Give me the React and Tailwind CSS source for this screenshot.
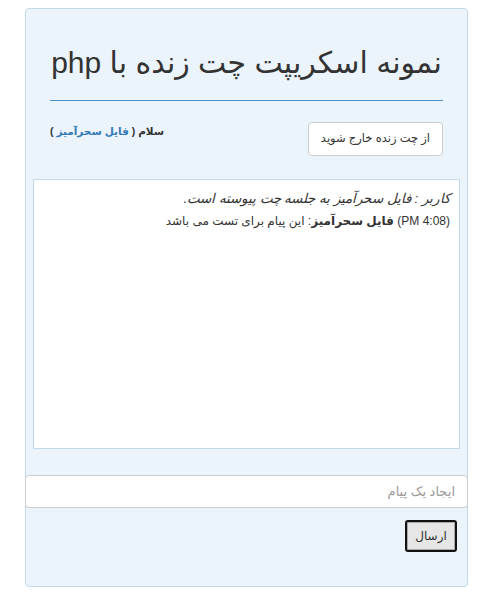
export default function App() {
  return (
    <div className="min-h-screen bg-white pt-[8px] font-['Liberation_Sans','DejaVu_Sans',sans-serif] text-[#333]">
      <div
        dir="rtl"
        className="ml-[25px] w-[443px] h-[579px] bg-[#ebf3fb] border border-[#c2d9ec] rounded-[4px]"
      >
        {/* Title */}
        <h1 className="pt-[34px] text-center whitespace-nowrap text-[30px] leading-[40px] text-[#333]">
          نمونه اسکریپت چت زنده با php
        </h1>
        <div className="mx-[24px] mt-[17px] h-px bg-[#4a94c9]" />

        {/* User row */}
        <div className="mx-[24px] mt-[21px] flex items-start justify-between">
          <button className="h-[34px] px-[12px] bg-white border border-[#ccc] rounded-[4px] text-[11.5px] text-[#333]">
            از چت زنده خارج شوید
          </button>
          <div className="pt-[2px] text-[10.5px] font-bold text-[#333]">
            سلام ( <span className="text-[#337ab7]">فایل سحرآمیز</span> )
          </div>
        </div>

        {/* Chat log */}
        <div className="mx-[7px] mt-[23px] h-[270px] bg-white border border-[#c2d9ec] px-[9px] pt-[8px] text-right">
          <div className="italic text-[13.5px] leading-[21px] text-[#333]">
            کاربر : فایل سحرآمیز به جلسه چت پیوسته است.
          </div>
          <div className="mt-[2px] text-[12px] leading-[20px] text-[#333]">
            (PM 4:08) <b>فایل سحرآمیز</b>: این پیام برای تست می باشد
          </div>
        </div>

        {/* Message input */}
        <input
          placeholder="ایجاد یک پیام"
          className="block mt-[26px] -mx-px w-[443px] h-[33px] bg-white border border-[#ccc] rounded-[4px] px-[12px] text-[13px] placeholder:text-[#999] outline-none"
        />

        <div className="mt-[12px] mr-[10px] flex">
          <button className="w-[52px] h-[32px] bg-[#e6e6e6] border-2 border-[#111] rounded-[3px] text-[12px] text-[#333] shadow-[inset_0_0_0_1px_#aaa]">
            ارسال
          </button>
        </div>
      </div>
    </div>
  );
}
